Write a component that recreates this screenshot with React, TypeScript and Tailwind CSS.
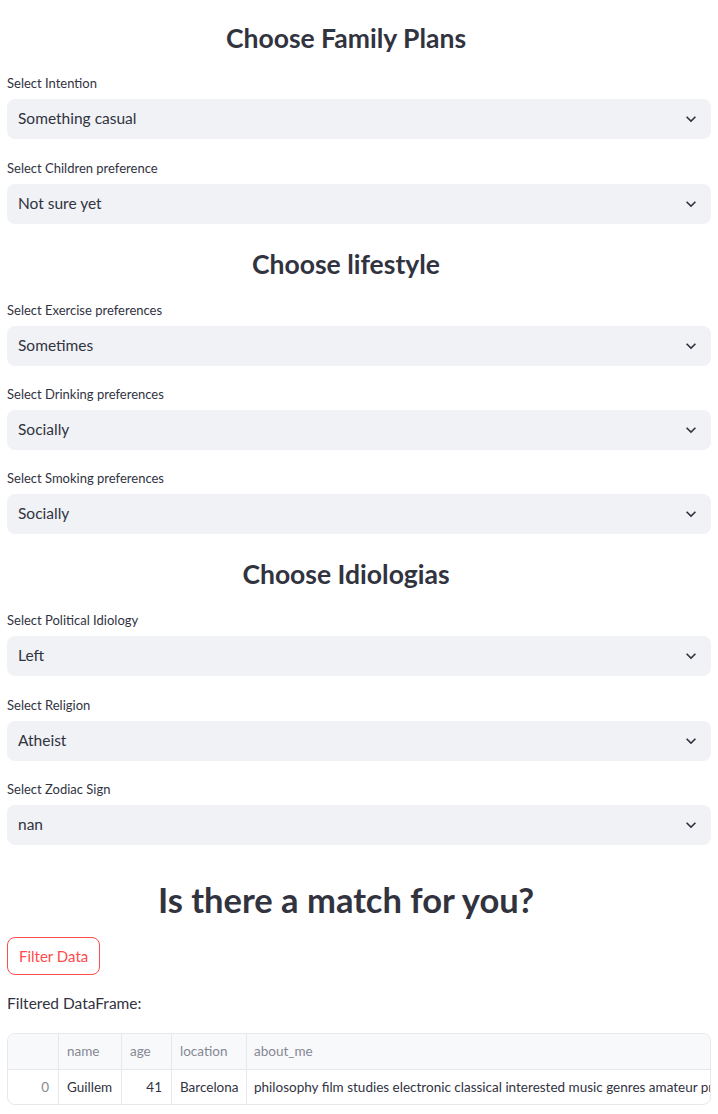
import React from "react";

const FONT = { fontFamily: "Lato, 'Noto Sans', 'Liberation Sans', sans-serif" };

function Chevron() {
  return (
    <svg width="20" height="20" viewBox="0 0 24 24" fill="#31333F" aria-hidden="true">
      <path d="M16.59 8.59L12 13.17 7.41 8.59 6 10l6 6 6-6z" />
    </svg>
  );
}

function Field({ label, value, className = "" }: { label: string; value: string; className?: string }) {
  return (
    <div className={className}>
      <div className="h-[26px] text-[13px] leading-[20px] text-[#31333F]">{label}</div>
      <div className="flex h-[40px] items-center justify-between rounded-[8px] bg-[#f0f2f6] pl-[11px] pr-[10px]">
        <span className="text-[15.5px] text-[#31333F]">{value}</span>
        <Chevron />
      </div>
    </div>
  );
}

function Title({ children, className = "" }: { children: React.ReactNode; className?: string }) {
  return (
    <h2 className={"pr-[26px] text-center text-[26.5px] font-bold leading-[34px] text-[#31333F] " + className}>
      {children}
    </h2>
  );
}

export default function App() {
  return (
    <div style={FONT} className="min-h-screen bg-white px-[7px] text-[#31333F]">
      <Title className="pt-[21px]">Choose Family Plans</Title>
      <Field className="mt-[18px]" label="Select Intention" value="Something casual" />
      <Field className="mt-[19px]" label="Select Children preference" value="Not sure yet" />

      <Title className="mt-[23px]">Choose lifestyle</Title>
      <Field className="mt-[19px]" label="Select Exercise preferences" value="Sometimes" />
      <Field className="mt-[18px]" label="Select Drinking preferences" value="Socially" />
      <Field className="mt-[18px]" label="Select Smoking preferences" value="Socially" />

      <Title className="mt-[23px]">Choose Idiologias</Title>
      <Field className="mt-[19px]" label="Select Political Idiology" value="Left" />
      <Field className="mt-[19px]" label="Select Religion" value="Atheist" />
      <Field className="mt-[18px]" label="Select Zodiac Sign" value="nan" />

      <h1 className="mt-[33px] pr-[26px] text-center text-[34.5px] font-bold leading-[44px] text-[#31333F]">
        Is there a match for you?
      </h1>

      <button className="mt-[15px] flex h-[38px] items-center rounded-[8px] border border-[#ff4b4b] bg-white px-[11px] text-[15px] text-[#ff4b4b]">
        Filter Data
      </button>

      <p className="mt-[16px] text-[15.5px] leading-[24px] text-[#31333F]">Filtered DataFrame:</p>

      <div className="mt-[18px] overflow-hidden rounded-[8px] border border-[#e6e8ec]">
        <div className="flex h-[36px] items-center border-b border-[#e6e8ec] bg-[#f8f9fb] text-[13.5px] text-[#868893]">
          <div className="h-full w-[51px] shrink-0 border-r border-[#e6e8ec]" />
          <div className="flex h-full w-[63px] shrink-0 items-center border-r border-[#e6e8ec] px-[8px]">name</div>
          <div className="flex h-full w-[50px] shrink-0 items-center border-r border-[#e6e8ec] px-[8px]">age</div>
          <div className="flex h-full w-[75px] shrink-0 items-center border-r border-[#e6e8ec] px-[8px]">location</div>
          <div className="flex h-full flex-1 items-center px-[7px]">about_me</div>
        </div>
        <div className="flex h-[34px] items-center text-[13.5px] text-[#31333F]">
          <div className="flex h-full w-[51px] shrink-0 items-center justify-end border-r border-[#e6e8ec] px-[9px] text-[#868893]">0</div>
          <div className="flex h-full w-[63px] shrink-0 items-center border-r border-[#e6e8ec] px-[8px]">Guillem</div>
          <div className="flex h-full w-[50px] shrink-0 items-center justify-end border-r border-[#e6e8ec] px-[9px]">41</div>
          <div className="flex h-full w-[75px] shrink-0 items-center border-r border-[#e6e8ec] px-[8px]">Barcelona</div>
          <div className="flex h-full min-w-0 flex-1 items-center overflow-hidden whitespace-nowrap px-[7px]">
            philosophy film studies electronic classical interested music genres amateur producer
          </div>
        </div>
      </div>
    </div>
  );
}
